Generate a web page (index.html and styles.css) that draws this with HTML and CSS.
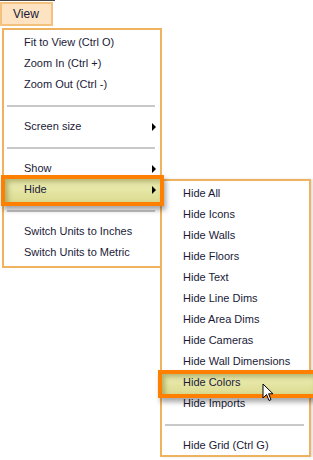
FILE: index.html
```html
<html>
    <head>
        <title>View menu</title>
        <meta charset="UTF-8" />
        <link rel="stylesheet" href="styles.css">
    </head>
    <body>
        <div class="bar">
            <div class="view-btn">View</div>
        </div>
        <div class="menu main">
            <div class="item">Fit to View (Ctrl O)</div>
            <div class="item">Zoom In (Ctrl +)</div>
            <div class="item">Zoom Out (Ctrl -)</div>
            <div class="sep"></div>
            <div class="item">Screen size <span class="arrow"></span></div>
            <div class="sep"></div>
            <div class="item">Show <span class="arrow"></span></div>
            <div class="item hot">
                <span class="label">Hide</span>
                <span class="arrow"></span>
                <div class="menu sub">
                    <div class="item">Hide All</div>
                    <div class="item">Hide Icons</div>
                    <div class="item">Hide Walls</div>
                    <div class="item">Hide Floors</div>
                    <div class="item">Hide Text</div>
                    <div class="item">Hide Line Dims</div>
                    <div class="item">Hide Area Dims</div>
                    <div class="item">Hide Cameras</div>
                    <div class="item">Hide Wall Dimensions</div>
                    <div class="item hot hot-sub">
                        <span class="label">Hide Colors</span>
                        <svg class="pointer" width="12" height="19" viewBox="0 0 12 19">
                            <path d="M1 1 L1 15 L4.5 11.5 L7 17.5 L9 16.6 L6.6 10.8 L11 10.8 Z"
                                fill="#fff" stroke="#000" stroke-width="1" stroke-linejoin="round" />
                        </svg>
                    </div>
                    <div class="item">Hide Imports</div>
                    <div class="sep"></div>
                    <div class="item">Hide Grid (Ctrl G)</div>
                </div>
            </div>
            <div class="sep"></div>
            <div class="item">Switch Units to Inches</div>
            <div class="item">Switch Units to Metric</div>
        </div>
    </body>
</html>
```

FILE: styles.css
```css
body {
    margin: 0;
    background: #fff;
    color: #1a1a38;
    font-family: "Liberation Sans", Arial, sans-serif;
    font-size: 11px;
}

.bar {
    height: 28px;
    width: 55px;
    border-top: 1px solid #444;
    box-sizing: border-box;
}

/* The menu title */
.view-btn {
    margin-top: 1px;
    width: 53px;
    height: 24px;
    box-sizing: border-box;
    border: 2px solid #f2c27e;
    background: #fde3c2;
    padding-left: 11px;
    line-height: 20px;
    font-size: 12px;
}

.menu {
    background: #fff;
    border: 2px solid #efb25e;
}

.main {
    margin-left: 2px;
    width: 160px;
    height: 240px;
    box-sizing: border-box;
    padding-top: 2px;
}

.item {
    position: relative;
    height: 21px;
    line-height: 21px;
    padding-left: 21px;
    white-space: nowrap;
}

.main > .item {
    padding-left: 20px;
}

.arrow {
    position: absolute;
    right: 4px;
    top: 7px;
    width: 0;
    height: 0;
    border-top: 4px solid transparent;
    border-bottom: 4px solid transparent;
    border-left: 4px solid #000;
}

.sep {
    height: 21px;
    display: flex;
    align-items: center;
    padding: 0 5px 0 3px;
}

.sep:before {
    content: "";
    flex: 1;
    height: 2px;
    background: #c8c8c8;
}

/* Highlighted row - orange frame laid over the row */
.hot {
    z-index: 1;
}

.hot:before {
    content: "";
    position: absolute;
    top: -4px;
    bottom: -6px;
    left: -3px;
    right: -4px;
    border: 4px solid #ff8000;
    background: linear-gradient(#eeeeb6, #dcdc92);
    box-shadow:
        2px 4px 5px rgba(0, 0, 0, 0.35),
        inset 3px 3px 5px rgba(110, 110, 30, 0.45);
}

.label {
    position: relative;
}

.sub {
    position: absolute;
    left: 156px;
    top: 0;
    width: 151px;
    height: 278px;
    box-sizing: border-box;
    padding-top: 2px;
    box-shadow: 2px 0 2px rgba(0, 0, 0, 0.12);
    z-index: -1;
}

.hot-sub {
    z-index: 2;
}

.hot-sub:before {
    left: -4px;
    right: -8px;
    top: -2px;
    bottom: -5px;
}

.pointer {
    position: absolute;
    left: 100px;
    top: 11px;
}
```
